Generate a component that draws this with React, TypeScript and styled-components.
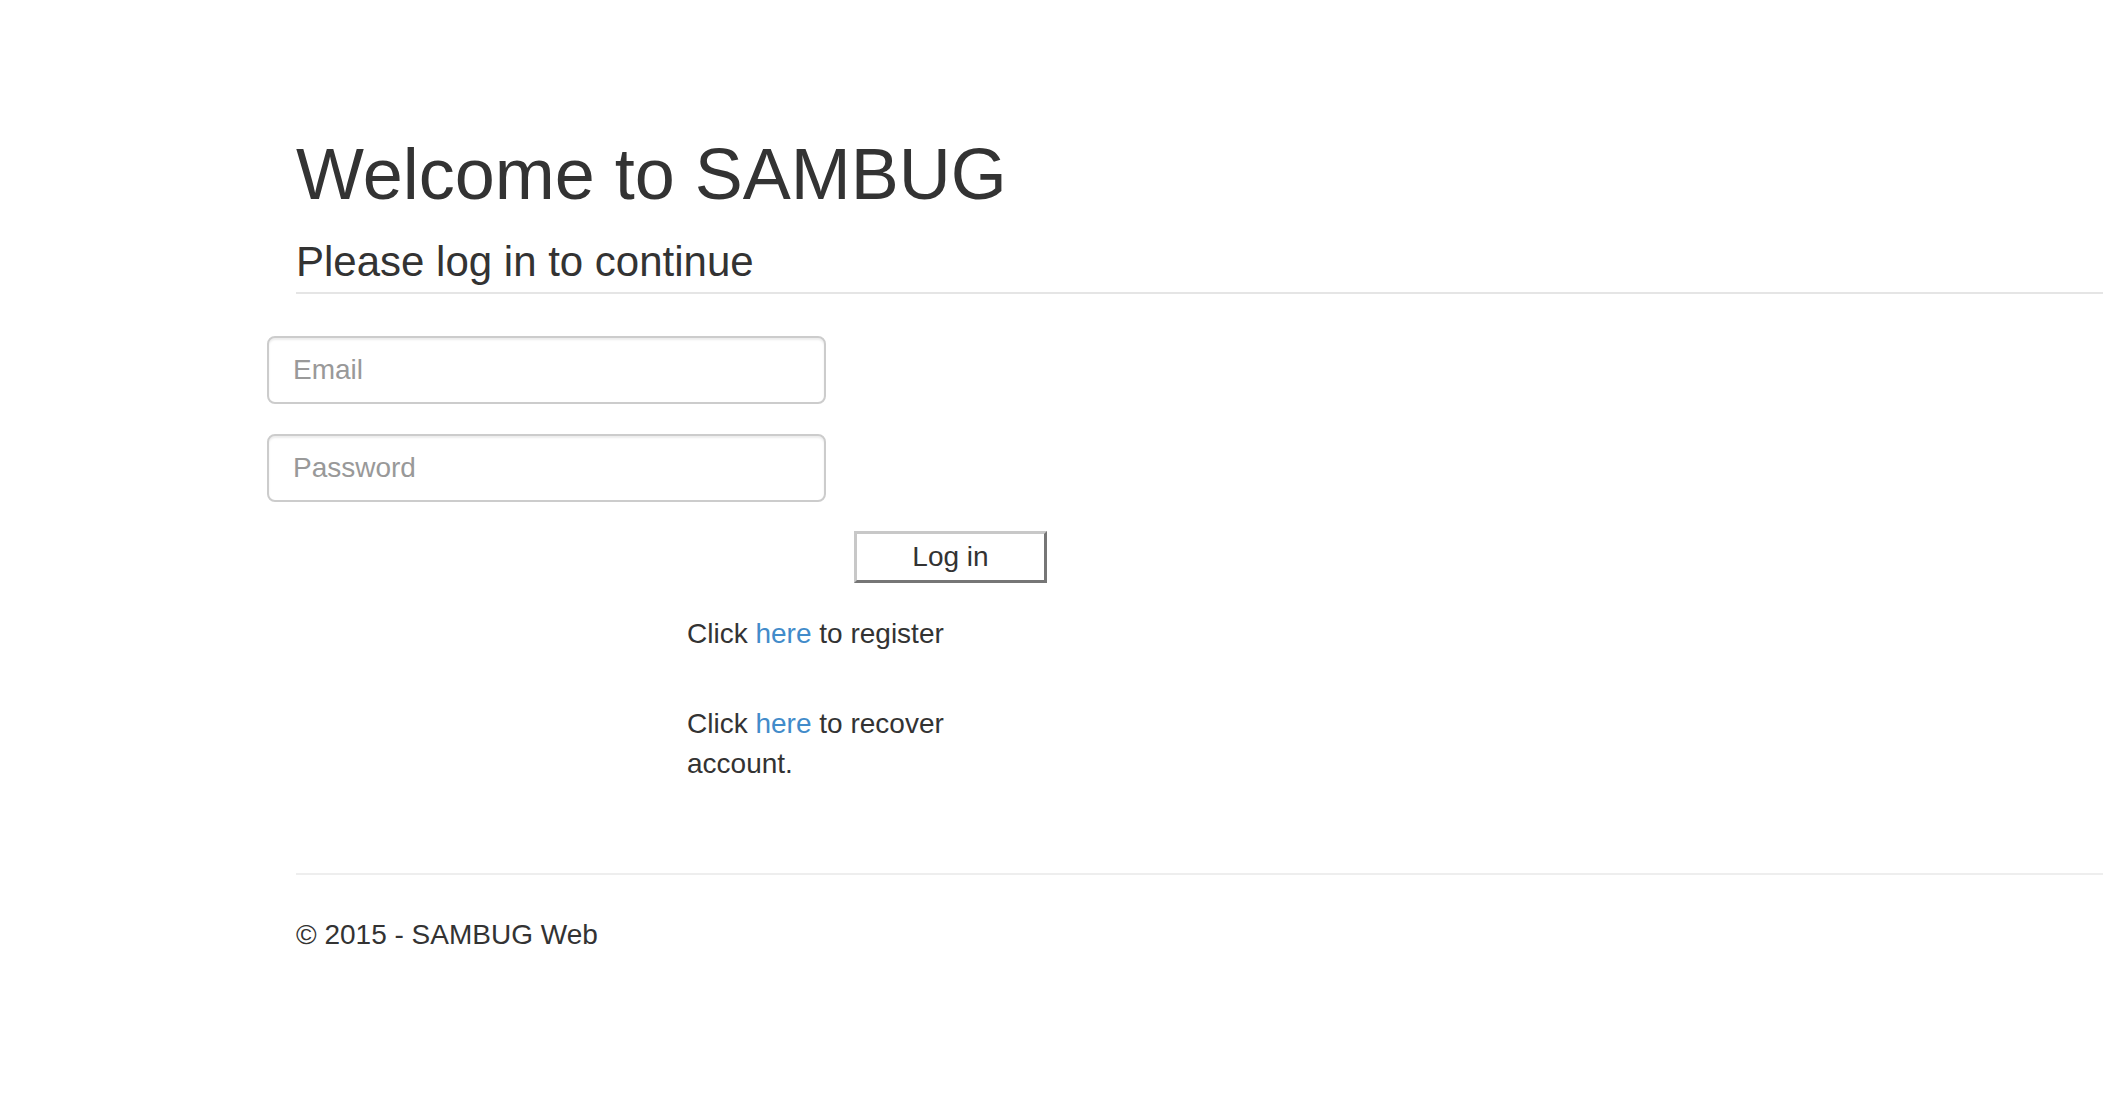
import React from 'react'
import styled, { createGlobalStyle } from 'styled-components'

const GlobalStyle = createGlobalStyle`
  html, body {
    margin: 0;
    padding: 0;
    background: #fff;
  }
  body {
    font-family: "Liberation Sans", Arial, Helvetica, sans-serif;
    font-size: 28px;
    line-height: 40px;
    color: #333;
  }
  * {
    box-sizing: border-box;
  }
`

const Page = styled.div`
  padding: 135px 0 120px 267px;
  min-height: 1104px;
`

const Header = styled.header`
  margin-left: 29px;
  padding-bottom: 7px;
  border-bottom: 2px solid #e5e5e5;
`

const Title = styled.h1`
  margin: 0 0 25px 0;
  font-size: 72px;
  line-height: 79px;
  font-weight: 400;
  color: #333;
`

const Subtitle = styled.h3`
  margin: 0;
  font-size: 42px;
  line-height: 46px;
  font-weight: 400;
  color: #333;
`

const LoginForm = styled.form`
  display: flex;
  flex-direction: column;
  align-items: flex-start;
  padding-top: 42px;
`

const Input = styled.input`
  display: block;
  width: 559px;
  height: 68px;
  margin: 0 0 30px 0;
  padding: 0 24px;
  font-family: inherit;
  font-size: 28px;
  color: #555;
  background: #fff;
  border: 2px solid #ccc;
  border-radius: 8px;
  box-shadow: inset 0 2px 2px rgba(0, 0, 0, 0.075);
  outline: none;

  &::placeholder {
    color: #999;
  }
`

const SubmitButton = styled.button`
  width: 193px;
  height: 52px;
  margin: -1px 0 0 587px;
  padding: 0;
  font-family: inherit;
  font-size: 28px;
  color: #333;
  background: #fff;
  border: 3px solid;
  border-color: #c8c8c8 #767676 #767676 #c8c8c8;
  cursor: pointer;
`

const Links = styled.div`
  width: 290px;
  margin: 31px 0 0 420px;
`

const LinkLine = styled.p<{ $gap?: number }>`
  margin: 0 0 ${p => p.$gap ?? 0}px 0;
  font-size: 28px;
  line-height: 40px;
`

const TextLink = styled.a`
  color: #428bca;
  text-decoration: none;
`

const Footer = styled.footer`
  margin: 89px 0 0 29px;
  padding-top: 40px;
  border-top: 2px solid #eee;
`

const Copy = styled.p`
  margin: 0;
  font-size: 28px;
  line-height: 40px;
`

export default function App() {
  return (
    <>
      <GlobalStyle />
      <Page>
        <Header>
          <Title>Welcome to SAMBUG</Title>
          <Subtitle>Please log in to continue</Subtitle>
        </Header>

        <LoginForm onSubmit={e => e.preventDefault()}>
          <Input type="email" placeholder="Email" />
          <Input type="password" placeholder="Password" />
          <SubmitButton type="submit">Log in</SubmitButton>
        </LoginForm>

        <Links>
          <LinkLine $gap={50}>
            Click <TextLink href="#">here</TextLink> to register
          </LinkLine>
          <LinkLine>
            Click <TextLink href="#">here</TextLink> to recover account.
          </LinkLine>
        </Links>

        <Footer>
          <Copy>© 2015 - SAMBUG Web</Copy>
        </Footer>
      </Page>
    </>
  )
}
